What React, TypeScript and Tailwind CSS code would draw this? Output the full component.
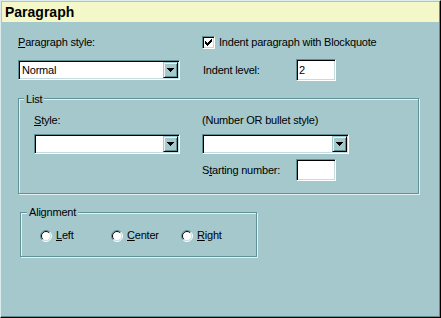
const sunken =
  'bg-white border border-t-[#5f8f93] border-l-[#5f8f93] border-r-white border-b-white shadow-[inset_1px_1px_0_#000,inset_-1px_-1px_0_#c4dcdf]';
const etched = 'relative border border-[#5f9397] shadow-[inset_1px_1px_0_#e4f0f1,1px_1px_0_#e4f0f1]';

function Combo({ value, className }: { value?: string; className: string }) {
  return (
    <div className={`${sunken} h-[20px] flex p-px ${className}`}>
      <div className="flex-1 pl-[2px] leading-[16px]">{value}</div>
      <div className="w-[15px] flex items-center justify-center bg-[#a4c8cc] border border-t-[#a4c8cc] border-l-[#a4c8cc] border-r-black border-b-black shadow-[inset_1px_1px_0_#e8f2f2,inset_-1px_-1px_0_#5f8f93]">
        <svg width="7" height="4" viewBox="0 0 7 4" shapeRendering="crispEdges">
          <path d="M0 0h7v1h-1v1h-1v1h-1v1h-1v-1h-1v-1h-1v-1h-1z" fill="#000" />
        </svg>
      </div>
    </div>
  );
}

function TextBox({ value }: { value?: string }) {
  return <div className={`${sunken} w-[40px] h-[22px] pl-[2px] leading-[20px]`}>{value}</div>;
}

function Radio({ label, accel, width }: { label: string; accel: string; width: string }) {
  return (
    <div className={`flex items-center gap-[4px] ${width}`}>
      <svg width="12" height="12" viewBox="0 0 12 12">
        <circle cx="6" cy="6" r="5" fill="#fff" />
        <path d="M2.1 9.9A5.5 5.5 0 0 1 9.9 2.1" stroke="#5f8f93" fill="none" />
        <path d="M9.9 2.1A5.5 5.5 0 0 1 2.1 9.9" stroke="#fff" fill="none" />
        <path d="M2.8 9.2A4.5 4.5 0 0 1 9.2 2.8" stroke="#000" fill="none" />
        <path d="M9.2 2.8A4.5 4.5 0 0 1 2.8 9.2" stroke="#c4dcdf" fill="none" />
      </svg>
      <span>
        <span className="underline">{accel}</span>
        {label}
      </span>
    </div>
  );
}

export default function App() {
  return (
    <div className="w-[441px] h-[318px] overflow-hidden bg-[#a4c8cc] border border-t-[#dcecee] border-l-[#dcecee] border-r-black border-b-black shadow-[inset_-1px_-1px_0_#5f8f93] font-['Liberation_Sans',Arial,sans-serif] text-[11px] leading-[13px] tracking-[-0.2px] text-black">
      <div className="mx-px mt-px h-[20px] bg-[#f4f8c8] pl-[3px] text-[14px] leading-[20px] font-bold tracking-normal">
        Paragraph
      </div>

      <div className="pl-[17px]">
        <div className="mt-[14px] grid grid-cols-[184px_1fr]">
          <div>
            <span className="underline">P</span>aragraph style:
          </div>
          <div className="flex items-center gap-[4px]">
            <div className={`${sunken} w-[13px] h-[13px] flex items-center justify-center`}>
              <svg width="7" height="7" viewBox="0 0 7 7" shapeRendering="crispEdges" fill="#000">
                <rect x="0" y="2" width="1" height="3" />
                <rect x="1" y="3" width="1" height="3" />
                <rect x="2" y="4" width="1" height="3" />
                <rect x="3" y="3" width="1" height="3" />
                <rect x="4" y="2" width="1" height="3" />
                <rect x="5" y="1" width="1" height="3" />
                <rect x="6" y="0" width="1" height="3" />
              </svg>
            </div>
            <span>Indent paragraph with Blockquote</span>
          </div>
        </div>

        <div className="mt-[10px] grid grid-cols-[184px_1fr]">
          <Combo value="Normal" className="mt-px w-[162px]" />
          <div className="flex items-center">
            <div className="w-[94px] pl-px">Indent level:</div>
            <TextBox value="2" />
          </div>
        </div>

        <div className={`${etched} mt-[17px] w-[401px] h-[96px] pl-[15px] pt-[15px]`}>
          <span className="absolute left-[5px] top-[-6px] px-[2px] bg-[#a4c8cc]">List</span>
          <div className="grid grid-cols-[168px_1fr]">
            <div>
              <span className="underline">S</span>tyle:
            </div>
            <div>(Number OR bullet style)</div>
            <Combo className="mt-[7px] w-[146px]" />
            <Combo className="mt-[7px] w-[147px]" />
            <div />
            <div className="mt-[5px] flex items-center">
              <div className="w-[94px]">
                S<span className="underline">t</span>arting number:
              </div>
              <TextBox />
            </div>
          </div>
        </div>

        <div className={`${etched} mt-[18px] ml-[2px] w-[237px] h-[45px] pl-[19px] pt-[16px]`}>
          <span className="absolute left-[6px] top-[-7px] px-[2px] bg-[#a4c8cc]">Alignment</span>
          <div className="flex">
            <Radio accel="L" label="eft" width="w-[71px]" />
            <Radio accel="C" label="enter" width="w-[70px]" />
            <Radio accel="R" label="ight" width="w-[60px]" />
          </div>
        </div>
      </div>
    </div>
  );
}
